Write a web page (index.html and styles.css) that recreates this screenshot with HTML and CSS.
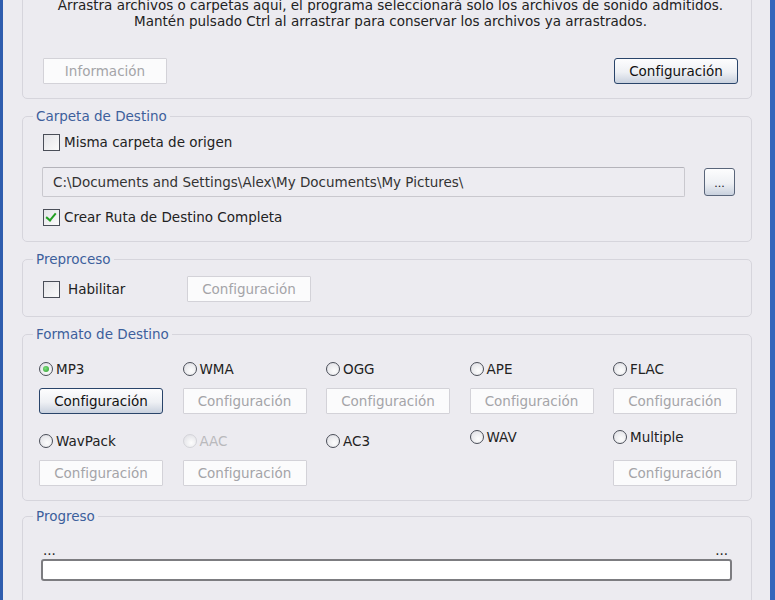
FILE: index.html
```html
<!DOCTYPE html>
<html lang="es">
<head>
  <meta charset="UTF-8" />
  <title>Conversor de audio</title>
  <link rel="stylesheet" href="styles.css">
</head>
<body>
  <div class="window">
    <div class="panel panel-drop">
      <p class="hint">Arrastra archivos o carpetas aquí, el programa seleccionará solo los archivos de sonido admitidos.<br>Mantén pulsado Ctrl al arrastrar para conservar los archivos ya arrastrados.</p>
      <div class="row-split">
        <button class="btn" disabled>Información</button>
        <button class="btn">Configuración</button>
      </div>
    </div>

    <fieldset class="panel">
      <legend>Carpeta de Destino</legend>
      <label class="check first"><span class="box"></span>Misma carpeta de origen</label>
      <div class="path-row">
        <div class="path">C:\Documents and Settings\Alex\My Documents\My Pictures\</div>
        <button class="btn btn-browse">...</button>
      </div>
      <label class="check last"><span class="box checked"></span>Crear Ruta de Destino Completa</label>
    </fieldset>

    <fieldset class="panel">
      <legend>Preproceso</legend>
      <div class="pre-row">
        <label class="check wide"><span class="box"></span>Habilitar</label>
        <button class="btn" disabled>Configuración</button>
      </div>
    </fieldset>

    <fieldset class="panel">
      <legend>Formato de Destino</legend>
      <div class="formats">
        <div class="fmt"><label class="radio"><span class="dot on"></span>MP3</label><button class="btn">Configuración</button></div>
        <div class="fmt"><label class="radio"><span class="dot"></span>WMA</label><button class="btn" disabled>Configuración</button></div>
        <div class="fmt"><label class="radio"><span class="dot"></span>OGG</label><button class="btn" disabled>Configuración</button></div>
        <div class="fmt"><label class="radio"><span class="dot"></span>APE</label><button class="btn" disabled>Configuración</button></div>
        <div class="fmt"><label class="radio"><span class="dot"></span>FLAC</label><button class="btn" disabled>Configuración</button></div>
        <div class="fmt"><label class="radio"><span class="dot"></span>WavPack</label><button class="btn" disabled>Configuración</button></div>
        <div class="fmt"><label class="radio off"><span class="dot"></span>AAC</label><button class="btn" disabled>Configuración</button></div>
        <div class="fmt"><label class="radio"><span class="dot"></span>AC3</label></div>
        <div class="fmt up"><label class="radio"><span class="dot"></span>WAV</label></div>
        <div class="fmt up"><label class="radio"><span class="dot"></span>Multiple</label><button class="btn" disabled>Configuración</button></div>
      </div>
    </fieldset>

    <fieldset class="panel panel-progress">
      <legend>Progreso</legend>
      <div class="status"><span>...</span><span>...</span></div>
      <div class="bar"></div>
    </fieldset>
  </div>
</body>
</html>
```

FILE: styles.css
```css
html, body {
  margin: 0;
  height: 100%;
  overflow: hidden;
}
body {
  font-family: 'DejaVu Sans', Tahoma, sans-serif;
  font-size: 13.5px;
  color: #222;
  background: #ecebf0;
}
.window {
  height: 640px;
  border-left: 3px solid #2f5dae;
  border-right: 5px solid #3566bb;
  padding: 0 18px 0 19px;
  margin-top: -40px;
}
.panel {
  border: 1px solid #d6d5dc;
  border-radius: 5px;
  margin: 0 0 10px;
  padding: 0 0 0 20px;
  min-width: 0;
}
.panel-progress {
  margin-top: -2px;
}
legend {
  color: #3d5f9c;
  padding: 0 3px;
  margin-left: -10px;
  line-height: 14px;
}
.panel-drop {
  padding: 36px 13px 14px 20px;
}
.hint {
  margin: 0;
  text-align: center;
  line-height: 16px;
}
.row-split {
  display: flex;
  justify-content: space-between;
  margin-top: 29px;
}
.btn {
  font: inherit;
  width: 124px;
  height: 26px;
  padding: 0;
  color: #111;
  border: 1px solid #29446a;
  border-radius: 3px;
  background: linear-gradient(#fdfdfe, #eef0f4 55%, #c9d1de);
}
.btn:disabled {
  color: #a4a4a8;
  border-color: #d3d2d8;
  border-radius: 1px;
  background: #fbfbfc;
}
.check, .radio {
  display: flex;
  align-items: center;
  height: 18px;
}
.box {
  width: 15px;
  height: 15px;
  border: 1px solid #4a4e58;
  background: linear-gradient(135deg, #e4e4e8, #fbfbfb);
  margin-right: 4px;
  position: relative;
}
.box.checked::after {
  content: "";
  position: absolute;
  left: 4px;
  top: 1px;
  width: 4px;
  height: 8px;
  border: solid #22a022;
  border-width: 0 2px 2px 0;
  transform: rotate(40deg);
}
.check.first {
  margin-top: 10px;
}
.check.last {
  margin-bottom: 15px;
}
.path-row {
  display: flex;
  align-items: center;
  margin: 16px 0 11px -1px;
}
.path {
  width: 631px;
  height: 28px;
  line-height: 28px;
  padding-left: 10px;
  border: 1px solid #c9c8ce;
  border-top-color: #b4b3ba;
  border-radius: 2px;
  background: #edecf1;
  color: #333;
}
.btn-browse {
  width: 31px;
  height: 28px;
  margin-left: 19px;
  border-color: #59657a;
  font-size: 11px;
  padding-top: 3px;
}
.pre-row {
  display: flex;
  align-items: center;
  margin: 10px 0 14px;
}
.check.wide {
  width: 144px;
}
.check.wide .box {
  margin-right: 8px;
}
.formats {
  display: grid;
  grid-template-columns: repeat(5, 143.5px);
  margin: 19px 0 14px -4px;
  row-gap: 18px;
  align-items: start;
}
.fmt {
  display: flex;
  flex-direction: column;
  gap: 10px;
}
.fmt.up .radio {
  margin: -4px 0 4px;
}
.radio .dot {
  width: 14px;
  height: 14px;
  border-radius: 50%;
  border: 1px solid #4a4e58;
  background: radial-gradient(circle at 60% 65%, #fdfdfd, #dcdce2);
  margin-right: 3px;
  position: relative;
  box-sizing: border-box;
}
.dot.on::after {
  content: "";
  position: absolute;
  left: 3px;
  top: 3px;
  width: 6px;
  height: 6px;
  border-radius: 50%;
  background: radial-gradient(circle at 40% 40%, #7fe07f, #2a9a2a);
}
.radio.off {
  color: #b9b9bc;
}
.radio.off .dot {
  border-color: #d4d4d9;
}
.status {
  display: flex;
  justify-content: space-between;
  margin: 21px 23px 3px 0;
  line-height: 12px;
}
.bar {
  width: 687px;
  height: 18px;
  margin: 0 0 40px -2px;
  border: 2px solid #7c7c80;
  border-radius: 3px;
  background: #fff;
}
```
